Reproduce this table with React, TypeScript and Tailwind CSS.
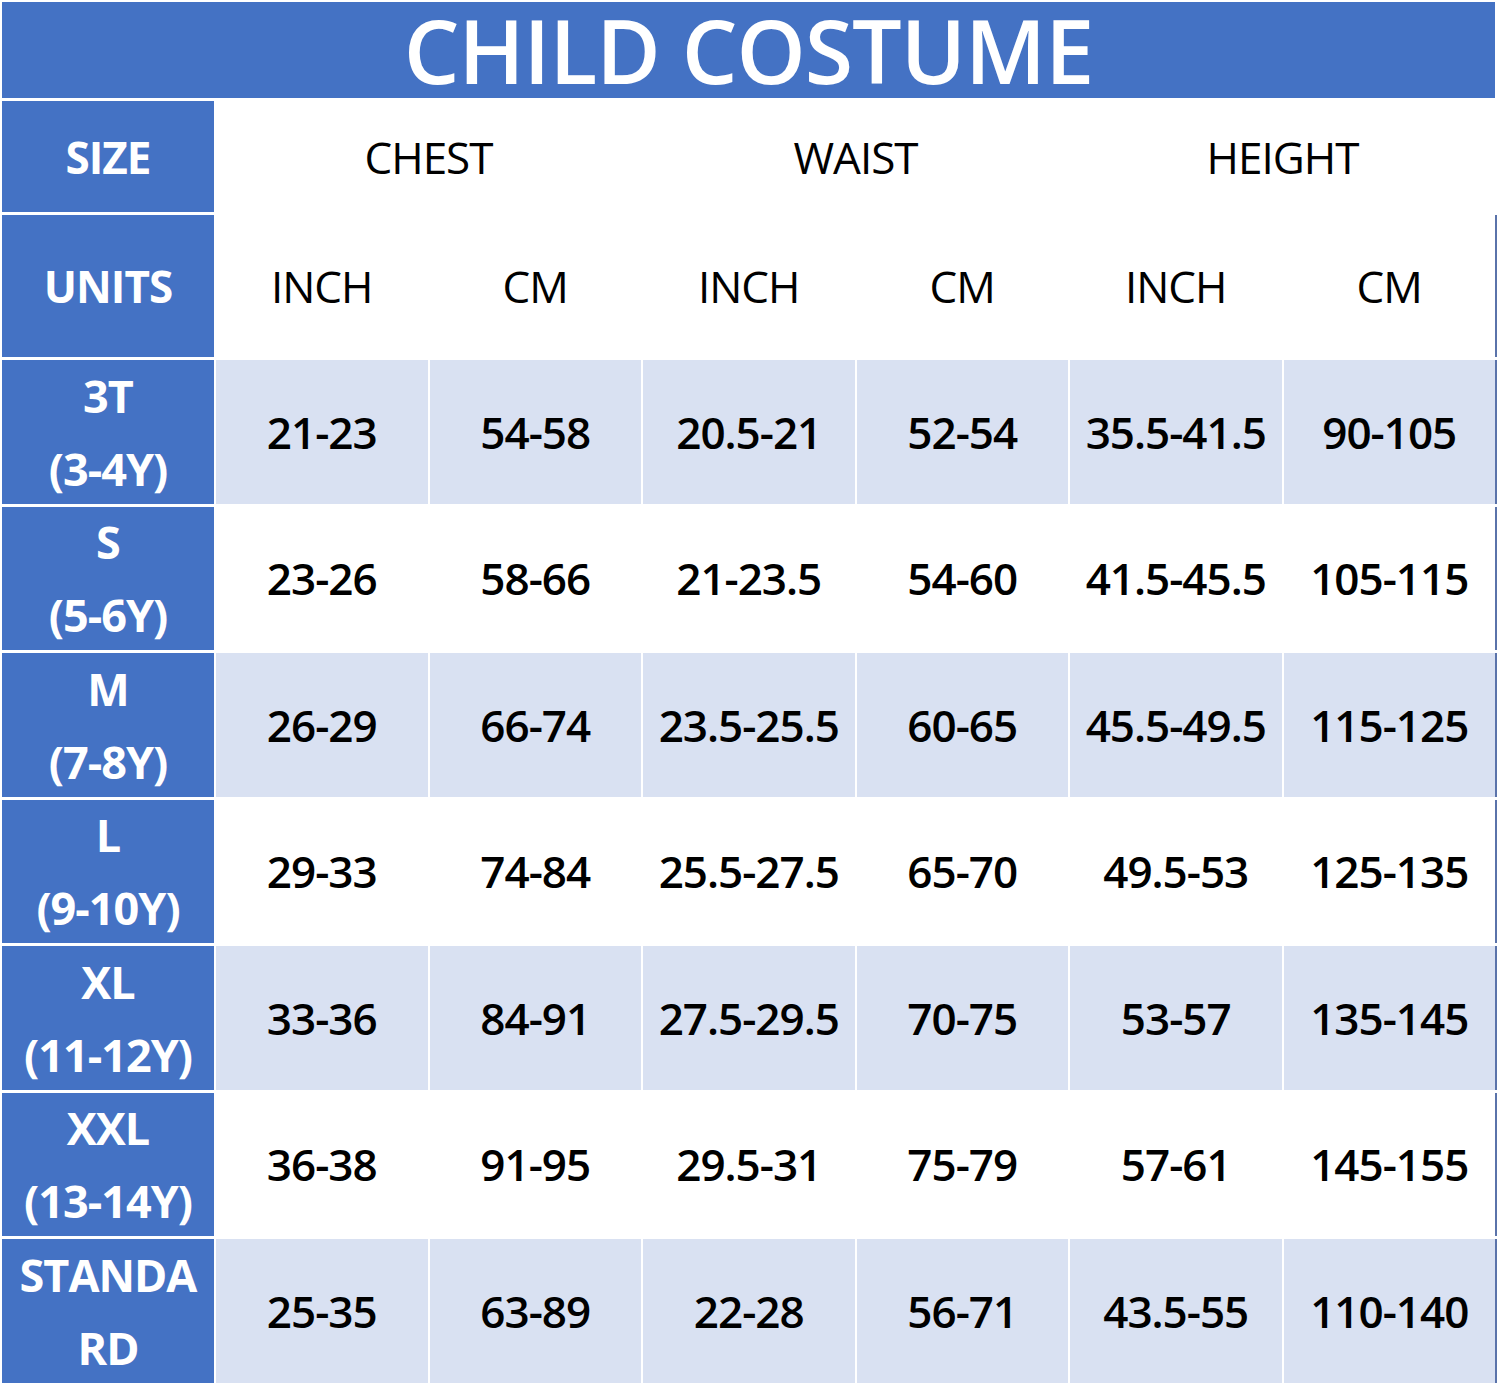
const rows = [
  { size: ["3T", "(3-4Y)"], vals: ["21-23", "54-58", "20.5-21", "52-54", "35.5-41.5", "90-105"], shaded: true },
  { size: ["S", "(5-6Y)"], vals: ["23-26", "58-66", "21-23.5", "54-60", "41.5-45.5", "105-115"], shaded: false },
  { size: ["M", "(7-8Y)"], vals: ["26-29", "66-74", "23.5-25.5", "60-65", "45.5-49.5", "115-125"], shaded: true },
  { size: ["L", "(9-10Y)"], vals: ["29-33", "74-84", "25.5-27.5", "65-70", "49.5-53", "125-135"], shaded: false },
  { size: ["XL", "(11-12Y)"], vals: ["33-36", "84-91", "27.5-29.5", "70-75", "53-57", "135-145"], shaded: true },
  { size: ["XXL", "(13-14Y)"], vals: ["36-38", "91-95", "29.5-31", "75-79", "57-61", "145-155"], shaded: false },
  { size: ["STANDA", "RD"], vals: ["25-35", "63-89", "22-28", "56-71", "43.5-55", "110-140"], shaded: true },
];

const units = ["INCH", "CM", "INCH", "CM", "INCH", "CM"];

export default function App() {
  return (
    <div className="w-[1500px] h-[1388px] bg-white pl-[2px] pt-[2px] font-['Open_Sans','Noto_Sans',sans-serif] text-black">
      <div className="w-[1493px] h-[96px] bg-[#4472c4] flex items-center justify-center">
        <span className="text-white text-[88px] font-semibold tracking-[-1px] leading-[80px]">CHILD COSTUME</span>
      </div>
      <div className="mt-[3px] w-[1493px] grid grid-cols-[212px_repeat(6,1fr)] grid-rows-[111px_142px_repeat(7,143.5px)] gap-x-[2px] gap-y-[3px]">
        <div className="bg-[#4472c4] flex items-center justify-center text-white font-bold text-[44px] tracking-[-1px]">SIZE</div>
        <div className="col-span-2 flex items-center justify-center text-[44px] font-medium tracking-[-1px]">CHEST</div>
        <div className="col-span-2 flex items-center justify-center text-[44px] font-medium tracking-[-1px]">WAIST</div>
        <div className="col-span-2 flex items-center justify-center text-[44px] font-medium tracking-[-1px]">HEIGHT</div>

        <div className="bg-[#4472c4] flex items-center justify-center text-white font-bold text-[44px] tracking-[-1px]">UNITS</div>
        {units.map((u, i) => (
          <div
            key={i}
            className={
              "flex items-center justify-center text-[44px] font-medium tracking-[-1px] " +
              (i === 5 ? "shadow-[2px_0_0_#5a73aa]" : "")
            }
          >
            {u}
          </div>
        ))}

        {rows.map((r, ri) => (
          <>
            <div
              key={"s" + ri}
              className="bg-[#4472c4] flex flex-col items-center justify-center text-white font-bold text-[45px] leading-[73px] tracking-[-1px]"
            >
              <span>{r.size[0]}</span>
              <span>{r.size[1]}</span>
            </div>
            {r.vals.map((v, vi) => (
              <div
                key={ri + "-" + vi}
                className={
                  "flex items-center justify-center text-[44px] font-semibold tracking-[-1px] " +
                  (r.shaded ? "bg-[#d9e1f2] " : "bg-white ") +
                  (vi === 5 ? "shadow-[2px_0_0_#5a73aa]" : "")
                }
              >
                {v}
              </div>
            ))}
          </>
        ))}
      </div>
    </div>
  );
}
